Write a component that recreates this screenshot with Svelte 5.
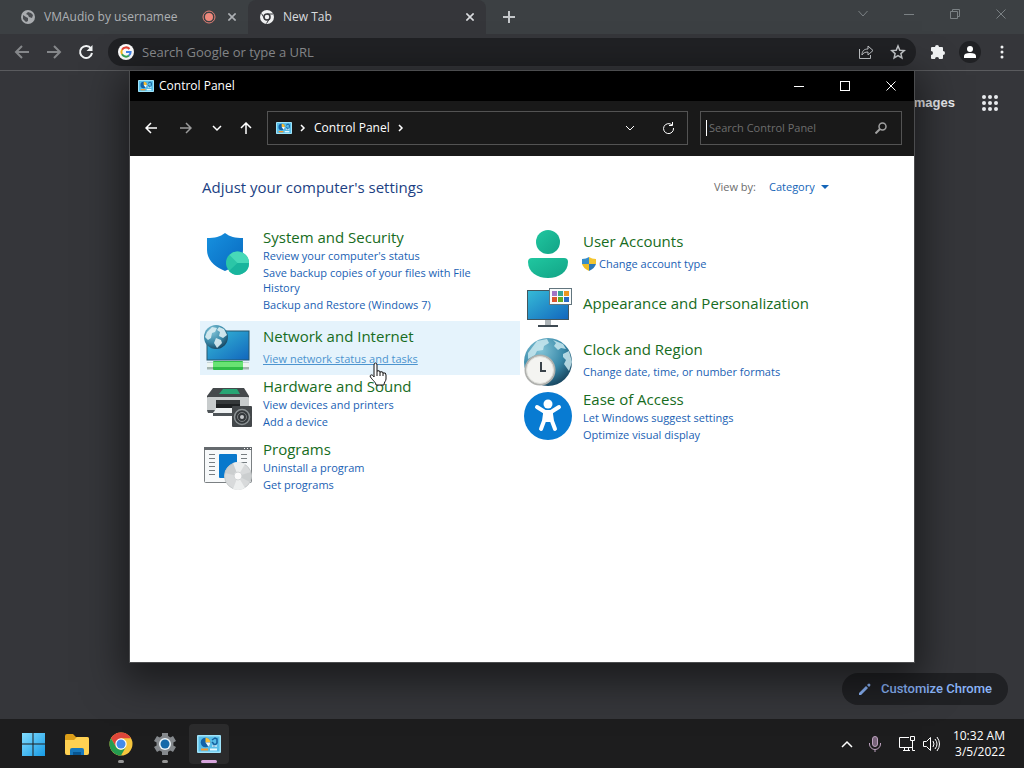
<script>
  let address = $state('');
  let query = $state('');
  let viewBy = $state('Category');

  const columns = [
    [
      {
        icon: 'security',
        title: 'System and Security',
        links: ["Review your computer's status", 'Save backup copies of your files with File History', 'Backup and Restore (Windows 7)']
      },
      { icon: 'network', title: 'Network and Internet', links: ['View network status and tasks'], active: true },
      { icon: 'hardware', title: 'Hardware and Sound', links: ['View devices and printers', 'Add a device'] },
      { icon: 'programs', title: 'Programs', links: ['Uninstall a program', 'Get programs'] }
    ],
    [
      { icon: 'users', title: 'User Accounts', links: ['Change account type'], admin: true },
      { icon: 'appearance', title: 'Appearance and Personalization', links: [] },
      { icon: 'clock', title: 'Clock and Region', links: ['Change date, time, or number formats'] },
      { icon: 'ease', title: 'Ease of Access', links: ['Let Windows suggest settings', 'Optimize visual display'] }
    ]
  ];

  const apps = [
    { id: 'start', label: 'Start' },
    { id: 'files', label: 'File Explorer' },
    { id: 'chrome', label: 'Google Chrome', running: true },
    { id: 'settings', label: 'Settings', running: true },
    { id: 'panel', label: 'Control Panel', active: true }
  ];
  const dots = [0, 1, 2, 3, 4, 5, 6, 7, 8];
</script>

{#snippet panelIcon(size)}
  <svg width={size} height={size} viewBox="0 0 24 24" aria-hidden="true">
    <rect x="0" y="3" width="24" height="18" rx="1" fill="#9fe4fb" />
    <rect x="1.5" y="4.5" width="21" height="15" fill="#58bde8" />
    <circle cx="8.5" cy="10.5" r="4.8" fill="#1262a8" />
    <path d="M8.5 10.5V5.700a4.800 4.800 0 0 1 4.800 4.800z" fill="#f9bd36" />
    <path d="M8.500 10.500h4.800a5 5 0 0 1-2 4z" fill="#e9f8ff" />
    <path d="M15 8l3-2 2 1v4l-2 2M15 10l2 2v3" fill="none" stroke="#165f9d" stroke-width="1.5" />
    <path d="M15 14h5" stroke="#fff" />
    <path d="M4 17.5h7" stroke="#f59a30" stroke-width="2" />
    <path d="M13 17.5h7" stroke="#e8fbff" stroke-width="2" />
  </svg>
{/snippet}

{#snippet cross(size)}
  <svg width={size} height={size} viewBox="0 0 10 10" fill="none" stroke="currentColor" aria-hidden="true"><path d="M.5 .5l9 9M9.5 .5l-9 9" /></svg>
{/snippet}

{#snippet categoryIcon(name)}
  <svg class="cat-icon" width="48" height="48" viewBox="0 0 48 48" aria-hidden="true">
    {#if name === 'security'}
      <path d="M21 3c5 4 10 5 18 5v12c0 10-8 17-18 21C11 37 3 30 3 20V8c8 0 13-1 18-5z" fill="url(#shieldFill)" />
      <circle cx="33.5" cy="33" r="11.5" fill="#2bc6a7" />
      <path d="M33.5 33l-8-8A11.5 11.5 0 0 1 45 33z" fill="#48d9b8" />
      <path d="M33.5 33H45a11.5 11.5 0 0 1-20 8z" fill="#19b59d" />
    {:else if name === 'network'}
      <rect x="3" y="6" width="42" height="29" fill="url(#screenFill)" stroke="#26566d" />
      <path d="M3 41h42" stroke="#a3b5b0" stroke-width="7" />
      <path d="M3 40h42" stroke="#ecf5f0" stroke-width="4" />
      <rect x="9" y="36" width="30" height="9" rx="1" fill="#2fbd47" />
      <rect x="9" y="37" width="30" height="5" fill="#69e373" />
      <circle cx="12" cy="12" r="12" fill="url(#globeFill)" />
      <path d="M3 7l5-5 5 1-2 4-3 1-1 5-3 2-3-3zM15 2l5 2 3 6-4 3-4-2 1-4-3-2zM12 13l5 2 1 3-5 5-3-5z" fill="#dceef3" opacity=".9" />
    {:else if name === 'hardware'}
      <path d="M9 9h31l5 8v15H3V17z" fill="#45494c" />
      <path d="M19 10h14l3 5H15z" fill="#27a574" />
      <rect x="3" y="18" width="42" height="15" rx="1" fill="#c8cccd" />
      <path d="M12 21h24v8H12z" fill="#34383a" />
      <path d="M12 25h24v4H12z" fill="#1e2123" />
      <path d="M12 29h23l-3 5H10z" fill="#eef1f2" />
      <path d="M3 31h8l-2 3H4zM9 34h23v3H9z" fill="#4e5458" />
      <rect x="28" y="27" width="20" height="21" rx="1" fill="#43474a" />
      <circle cx="38" cy="38" r="7.5" fill="#34383b" stroke="#8b9193" stroke-width="1.5" />
      <circle cx="38" cy="38" r="4.5" fill="none" stroke="#7c8082" />
      <circle cx="38" cy="38" r="2" fill="#c4c7c9" />
    {:else if name === 'programs'}
      <rect x=".5" y="5.5" width="47" height="35" rx="1" fill="#f7f9fa" stroke="#7b8083" />
      <path d="M0 6.5h48" stroke="#656a6e" stroke-width="3" />
      <path d="M40 6.5h1M43 6.500h1M46 6.500h1" stroke="#fff" />
      <path d="M5 12.5h6M5 16.500h6M5 20.500h6M5 24.500h6M5 28.500h6M5 32.500h6M37 12.500h6M37 16.500h6M37 20.500h6" stroke="#777e82" />
      <rect x="15" y="12" width="18" height="24" rx="1" fill="#0878cc" />
      <circle cx="34" cy="34" r="13.5" fill="#d8dadb" stroke="#c6cacb" />
      <path d="M34 34l-5-13a14 14 0 0 1 12 1zM34 34l7 12a14 14 0 0 1-12 1z" fill="#eceeee" />
      <path d="M34 34l13-4a14 14 0 0 1-1 10zM34 34l-13-3a14 14 0 0 1 8-10z" fill="#b8bcbe" opacity=".4" />
      <circle cx="34" cy="34" r="4" fill="#fafafa" stroke="#d1d4d5" />
    {:else if name === 'users'}
      <circle cx="24" cy="12" r="12" fill="url(#userFill)" />
      <path d="M8 28h32a4 4 0 0 1 4 4c0 10-9 16-20 16S4 42 4 32a4 4 0 0 1 4-4z" fill="url(#userFill)" />
    {:else if name === 'appearance'}
      <rect x="3.5" y="6.5" width="41" height="29" fill="url(#screenFill)" stroke="#42565e" />
      <path d="M21 36h6v6h-6z" fill="#aeb5b9" /><path d="M14 41h20v2H14z" fill="#3e4951" />
      <rect x="25.5" y="4.5" width="22" height="16" fill="#f9fbfb" stroke="#62757e" />
      <path d="M28 7h5v5h-5z" fill="#a175c5" /><path d="M34 7h5v5h-5z" fill="#36a494" /><path d="M40 7h5v5h-5z" fill="#ed951f" />
      <path d="M28 13h5v5h-5z" fill="#dc542e" /><path d="M34 13h5v5h-5z" fill="#64ab25" /><path d="M40 13h5v5h-5z" fill="#276ac3" />
    {:else if name === 'clock'}
      <circle cx="24" cy="24" r="24" fill="url(#globeFill)" />
      <path d="M4 15L13 3l10-2 2 4-5 3-1 4-6 1-2 4-7 4zM29 2l10 4 3 5-5-1-3 2-4-4 2-3zM39 16l6-3 3 11-3 9-5-7 2-4-3-3z" fill="#c9e8ee" opacity=".85" />
      <circle cx="16" cy="32" r="15.5" fill="#b0b1ae" />
      <circle cx="16" cy="32" r="13.5" fill="#f4f4f1" stroke="#dedfda" />
      <path d="M17 24v9h5" fill="none" stroke="#394249" stroke-width="2" />
    {:else}
      <circle cx="24" cy="24" r="24" fill="#087bd2" />
      <circle cx="24" cy="12" r="4.5" fill="#fff" />
      <path d="M13 15l8 5h6l8-5M21 22l-1 7-3 8M27 22l1 7 3 8" fill="none" stroke="#fff" stroke-width="4" stroke-linecap="round" stroke-linejoin="round" />
      <path d="M19 19h10v11H19z" fill="#fff" />
    {/if}
  </svg>
{/snippet}

{#snippet appIcon(id)}
  {#if id === 'panel'}
    {@render panelIcon(24)}
  {:else}
    <svg width="24" height="24" viewBox="0 0 24 24" aria-hidden="true">
      {#if id === 'start'}
        <path d="M1 1h10.5v10.500H1zM12.500 1H24v10.500H12.500zM1 12.500h10.500V24H1zM12.500 12.500H24V24H12.500z" fill="url(#startFill)" />
      {:else if id === 'files'}
        <path d="M0 4q0-2 2-2h6l3 3h11q2 0 2 2v4H0z" fill="#dc9e18" />
        <path d="M0 8h9l3-3h10q2 0 2 2v14q0 2-2 2H2q-2 0-2-2z" fill="#ffd152" />
        <path d="M5 23v-5q0-2 2-2h10q2 0 2 2v5z" fill="#1778bd" /><path d="M8 20h8v3H8z" fill="#075693" />
      {:else if id === 'chrome'}
        <circle cx="12" cy="12" r="11.5" fill="#f6c63d" />
        <path d="M2 6.300A11.500 11.500 0 0 1 22 6.300H12L7 15z" fill="#df463a" />
        <path d="M2 6.300l5 8.600a5.700 5.700 0 0 0 9.900 0L12 23.500A11.500 11.500 0 0 1 2 6.300z" fill="#259c50" />
        <circle cx="12" cy="12" r="5.7" fill="#fff" /><circle cx="12" cy="12" r="4.5" fill="#448bea" />
      {:else}
        <path d="M12 1v22M2.500 6.500l19 11M21.500 6.500l-19 11" stroke="#85898d" stroke-width="6" stroke-linejoin="round" />
        <circle cx="12" cy="12" r="8.5" fill="#85898d" />
        <circle cx="12" cy="12" r="6" fill="#edf4f9" /><circle cx="12" cy="12" r="4.5" fill="#1669a9" />
      {/if}
    </svg>
  {/if}
{/snippet}

<svg class="defs" width="0" height="0" aria-hidden="true">
  <defs>
    <linearGradient id="shieldFill" x2="1" y2="1"><stop stop-color="#1791df" /><stop offset="1" stop-color="#0869bf" /></linearGradient>
    <linearGradient id="screenFill" x2="1" y2="1"><stop stop-color="#36bbd7" /><stop offset="1" stop-color="#1266bd" /></linearGradient>
    <radialGradient id="globeFill" cx=".35" cy=".25" r=".8"><stop stop-color="#83c4d7" /><stop offset=".6" stop-color="#3989a9" /><stop offset="1" stop-color="#17445e" /></radialGradient>
    <linearGradient id="userFill" x2="1" y2="1"><stop stop-color="#20c7a0" /><stop offset="1" stop-color="#12a386" /></linearGradient>
    <linearGradient id="startFill" x2="1" y2="1"><stop stop-color="#82ddff" /><stop offset="1" stop-color="#169ae5" /></linearGradient>
  </defs>
</svg>

<div class="desktop">
  <section class="browser" aria-label="Browser">
    <div class="tabs">
      <div class="tab first">
        <svg width="14" height="14" viewBox="0 0 14 14" aria-hidden="true"><circle cx="7" cy="7" r="7" fill="#a9acaf" /><path d="M2 5l3 2 2 1v3l-2 1-3-3zM7 2l3 1 2 2-1 3-3-1-1-2-2-1z" fill="#4a4d51" /></svg>
        <span>VMAudio by usernamee</span>
        <svg width="14" height="14" viewBox="0 0 14 14" aria-hidden="true"><circle cx="7" cy="7" r="6" fill="none" stroke="#e57f75" /><circle cx="7" cy="7" r="4" fill="#ef887c" /></svg>
        <button class="tab-close" aria-label="Close VMAudio">{@render cross(8)}</button>
      </div>
      <div class="tab current">
        <svg width="14" height="14" viewBox="0 0 14 14" aria-hidden="true"><circle cx="7" cy="7" r="7" fill="#f0f1f2" /><circle cx="7" cy="7" r="3" fill="none" stroke="#35363a" stroke-width="1.5" /><path d="M7 4h6M4.500 8.500l-3-5M9.500 8.500l-3 5" stroke="#35363a" /></svg>
        <span>New Tab</span>
        <button class="tab-close" aria-label="Close New Tab">{@render cross(8)}</button>
      </div>
      <button class="new-tab" aria-label="New tab"><svg width="12" height="12" viewBox="0 0 12 12" stroke="currentColor" stroke-width="2"><path d="M6 0v12M0 6h12" /></svg></button>
      <div class="captions dim">
        <button aria-label="Search tabs"><svg width="10" height="8" viewBox="0 0 10 8" fill="none" stroke="currentColor"><path d="M.5 1l4.500 5 4.500-5" /></svg></button>
        <button aria-label="Minimize browser"><svg width="10" height="10" viewBox="0 0 10 10" stroke="currentColor"><path d="M0 5.500h10" /></svg></button>
        <button aria-label="Restore browser"><svg width="10" height="10" viewBox="0 0 10 10" fill="none" stroke="currentColor"><path d="M.5 2.500h7v7h-7zM2.500 2.500v-2h7v7h-2" /></svg></button>
        <button aria-label="Close browser">{@render cross(10)}</button>
      </div>
    </div>

    <div class="toolbar">
      <div class="tools">
        <button class="faded" aria-label="Back"><svg width="16" height="16" viewBox="0 0 16 16" fill="none" stroke="currentColor" stroke-width="2"><path d="M15 8H2M8 2L2 8l6 6" /></svg></button>
        <button class="faded" aria-label="Forward"><svg width="16" height="16" viewBox="0 0 16 16" fill="none" stroke="currentColor" stroke-width="2"><path d="M1 8h13M8 2l6 6-6 6" /></svg></button>
        <button aria-label="Reload"><svg width="16" height="16" viewBox="0 0 16 16" fill="none" stroke="currentColor" stroke-width="2"><path d="M13 4.500A6 6 0 1 0 14 9" /><path d="M14.500 1v6h-6z" fill="currentColor" stroke="none" /></svg></button>
      </div>
      <div class="omnibox">
        <svg width="16" height="16" viewBox="0 0 16 16" fill="none" stroke-width="2" aria-hidden="true"><circle cx="8" cy="8" r="8" fill="#fff" /><path d="M11.500 5A4.600 4.600 0 0 0 4 5.700" stroke="#e44336" /><path d="M4 5.700a4.600 4.600 0 0 0 0 4.600" stroke="#f5b61f" /><path d="M4 10.300A4.600 4.600 0 0 0 11 11.500" stroke="#33a554" /><path d="M11 11.500A4.600 4.600 0 0 0 12.600 8H8" stroke="#4285ee" /></svg>
        <input aria-label="Search Google or type a URL" placeholder="Search Google or type a URL" bind:value={address} />
        <button aria-label="Share"><svg width="16" height="16" viewBox="0 0 16 16" fill="none" stroke="currentColor"><path d="M1.500 5v9.500h11V11M4 11c0-4 2-6 6-6V2l5 4.500-5 4.500V8C7 8 5 9 4 11z" /></svg></button>
        <button aria-label="Bookmark"><svg width="16" height="16" viewBox="0 0 16 16" fill="none" stroke="currentColor" stroke-width="1.5"><path d="M8 2l1.800 4.200 4.500.4-3.400 3 1 4.400L8 11.700 4.100 14l1-4.400-3.400-3 4.500-.4z" /></svg></button>
      </div>
      <div class="tools">
        <button aria-label="Extensions"><svg width="16" height="16" viewBox="0 0 16 16" fill="currentColor"><path d="M5 3a2 2 0 0 1 4 0h3q1 0 1 1v3a2 2 0 0 1 0 4v3q0 1-1 1H9a2 2 0 0 0-4 0H2q-1 0-1-1v-3a2 2 0 0 0 0-4V4q0-1 1-1z" /></svg></button>
        <button aria-label="Profile"><svg width="22" height="22" viewBox="0 0 22 22"><circle cx="11" cy="11" r="11" fill="#202124" /><circle cx="11" cy="8" r="3" fill="#fff" /><path d="M5 17v-2q0-3 6-3t6 3v2z" fill="#fff" /></svg></button>
        <button aria-label="Browser menu"><svg width="4" height="14" viewBox="0 0 4 14" fill="currentColor"><circle cx="2" cy="2" r="1.5" /><circle cx="2" cy="7" r="1.5" /><circle cx="2" cy="12" r="1.5" /></svg></button>
      </div>
    </div>

    <div class="page">
      <div class="page-top">
        <a href="#images">Images</a>
        <button aria-label="Google apps"><svg width="16" height="16" viewBox="0 0 16 16" fill="currentColor">{#each dots as d (d)}<circle cx={2 + (d % 3) * 6} cy={2 + Math.floor(d / 3) * 6} r="2" />{/each}</svg></button>
      </div>
      <button class="customize">
        <svg width="14" height="14" viewBox="0 0 14 14" fill="currentColor" aria-hidden="true"><path d="M1 11l7-7 2 2-7 7H1zM9 3l1-1q1-1 2 0t0 2l-1 1z" /></svg>
        Customize Chrome
      </button>
    </div>
  </section>

  <main class="window">
    <header class="titlebar">
      {@render panelIcon(16)}
      <span>Control Panel</span>
      <div class="captions">
        <button aria-label="Minimize"><svg width="10" height="10" viewBox="0 0 10 10" stroke="currentColor"><path d="M0 5.500h10" /></svg></button>
        <button aria-label="Maximize"><svg width="10" height="10" viewBox="0 0 10 10" fill="none" stroke="currentColor"><rect x=".5" y=".5" width="9" height="9" /></svg></button>
        <button aria-label="Close">{@render cross(10)}</button>
      </div>
    </header>

    <nav class="navbar" aria-label="Control Panel navigation">
      <button class="back" aria-label="Back"><svg width="12" height="12" viewBox="0 0 12 12" fill="none" stroke="currentColor" stroke-width="1.5"><path d="M12 6H1M6 1L1 6l5 5" /></svg></button>
      <button class="forward" aria-label="Forward"><svg width="12" height="12" viewBox="0 0 12 12" fill="none" stroke="currentColor" stroke-width="1.5"><path d="M0 6h11M6 1l5 5-5 5" /></svg></button>
      <button class="recent" aria-label="Recent locations"><svg width="10" height="8" viewBox="0 0 10 8" fill="none" stroke="currentColor" stroke-width="1.5"><path d="M1 2l4 4 4-4" /></svg></button>
      <button class="up" aria-label="Up"><svg width="12" height="12" viewBox="0 0 12 12" fill="none" stroke="currentColor" stroke-width="1.5"><path d="M6 12V1M1 6l5-5 5 5" /></svg></button>
      <div class="address">
        {@render panelIcon(16)}
        <svg width="6" height="8" viewBox="0 0 6 8" fill="none" stroke="currentColor" stroke-width="1.5" aria-hidden="true"><path d="M1 1l3 3-3 3" /></svg>
        <a href="#control-panel">Control Panel</a>
        <svg width="6" height="8" viewBox="0 0 6 8" fill="none" stroke="currentColor" stroke-width="1.5" aria-hidden="true"><path d="M1 1l3 3-3 3" /></svg>
        <div class="address-tools">
          <button aria-label="Previous locations"><svg width="10" height="8" viewBox="0 0 10 8" fill="none" stroke="currentColor"><path d="M1 2l4 4 4-4" /></svg></button>
          <button aria-label="Refresh"><svg width="12" height="12" viewBox="0 0 12 12" fill="none" stroke="currentColor"><path d="M10 3a5 5 0 1 0 1.500 3M10.500 0v3.500H7" /></svg></button>
        </div>
      </div>
      <div class="search">
        <span class="caret"></span>
        <input aria-label="Search Control Panel" placeholder="Search Control Panel" bind:value={query} />
        <svg width="12" height="12" viewBox="0 0 12 12" fill="none" stroke="currentColor" stroke-width="1.5" aria-hidden="true"><circle cx="7.5" cy="4.5" r="3.5" /><path d="M5 7L.5 11.500" stroke-width="2" /></svg>
      </div>
    </nav>

    <div class="content">
      <div class="heading">
        <h1>Adjust your computer's settings</h1>
        <div class="view">
          <label for="view">View by:</label>
          <select id="view" bind:value={viewBy}><option>Category</option></select>
          <svg width="8" height="4" viewBox="0 0 8 4" fill="currentColor" aria-hidden="true"><path d="M0 0h8L4 4z" /></svg>
        </div>
      </div>

      <div class="categories">
        {#each columns as column, i (i)}
          <div class="column">
            {#each column as item (item.icon)}
              <section class="category" class:active={item.active} class:single={item.links.length < 2} class:bare={!item.links.length}>
                {@render categoryIcon(item.icon)}
                <div class="details">
                  <h2><a href="#{item.icon}">{item.title}</a></h2>
                  {#if item.links.length}
                    <ul>
                      {#each item.links as link (link)}
                        <li>
                          {#if item.admin}
                            <svg class="admin" width="14" height="14" viewBox="0 0 14 14" aria-hidden="true"><path d="M7 0C5 1 3 2 0 2v5h7z" fill="#368dc9" /><path d="M7 0c2 1 4 2 7 2v5H7z" fill="#f4c52f" /><path d="M0 7h7v7C3 12 1 10 0 7z" fill="#eebd27" /><path d="M7 7h7c-1 3-3 5-7 7z" fill="#2b77b7" /></svg>
                          {/if}
                          <a href="#{item.icon}-task">{link}</a>
                          {#if item.active}
                            <svg class="pointer" width="18" height="24" viewBox="0 0 18 24" aria-hidden="true"><path d="M5 14V3q0-2 1.500-2T8 3v6q3-1 3 1 3-1 3 1 3-1 3 2v4c0 2-2 3-2 6H7c0-3-5-6-6-9 1-2 3-1 4 1z" fill="#fff" stroke="#111" stroke-linejoin="round" /><path d="M8 9v5M11 10v4M14 11v3" stroke="#111" /></svg>
                          {/if}
                        </li>
                      {/each}
                    </ul>
                  {/if}
                </div>
              </section>
            {/each}
          </div>
        {/each}
      </div>
    </div>
  </main>

  <footer class="taskbar">
    <div class="apps">
      {#each apps as app (app.id)}
        <button aria-label={app.label} class:running={app.running} class:active={app.active}>{@render appIcon(app.id)}</button>
      {/each}
    </div>
    <div class="tray">
      <button class="more" aria-label="Show hidden icons"><svg width="12" height="8" viewBox="0 0 12 8" fill="none" stroke="currentColor" stroke-width="1.5"><path d="M1 7l5-5 5 5" /></svg></button>
      <button class="mic" aria-label="Microphone"><svg width="12" height="16" viewBox="0 0 12 16" fill="none" stroke="currentColor"><rect x="3.5" y=".5" width="5" height="10" rx="2.5" fill="#776379" /><path d="M.5 7v1a5.500 5.500 0 0 0 11 0V7M6 13.500V16" /></svg></button>
      <button class="status" aria-label="Network and volume">
        <svg width="17" height="17" viewBox="0 0 17 17" fill="none" stroke="currentColor"><path d="M10 2.500H.5v10h13V9M4 15.500h7M5.500 13v2M9.500 13v2M11.500 1.500h4v4h-4zM13.500 6v9.500H16" /></svg>
        <svg width="17" height="16" viewBox="0 0 17 16" fill="none" stroke="currentColor"><path d="M.5 5.500h3l4-4v13l-4-4h-3zM10 5q2 3 0 6M12 3q4 5 0 10M14 1q5 7 0 14" /></svg>
      </button>
      <button class="clock"><span>10:32 AM</span><span>3/5/2022</span></button>
    </div>
  </footer>
</div>

<style>
  :global(body){margin:0;background:#35363a}
  *{box-sizing:border-box}
  button,input,select{font:inherit;color:inherit;background:none;border:0;padding:0;margin:0;outline:0}
  button{display:flex;align-items:center;justify-content:center}
  a{color:inherit;text-decoration:none}
  svg{flex:none}
  .defs{position:absolute}
  .desktop{position:relative;display:flex;flex-direction:column;min-height:100vh;font:12px/16px "Open Sans","Noto Sans",sans-serif;color:#fff}

  .browser{flex:1;display:flex;flex-direction:column}
  .tabs{display:flex;height:34px;background:#3c4043;color:#adb0b4}
  .tab{display:flex;align-items:center;gap:9px;padding-right:9px}
  .tab span{flex:1;white-space:nowrap}
  .tab-close{width:14px;height:16px}
  .tab-close svg{stroke-width:2}
  .first{width:248px;padding-left:21px}
  .current{width:238px;padding-left:12px;background:#35363a;border-radius:8px 8px 0 0;color:#d9dbde}
  .new-tab{width:46px;color:#c4c7ca}
  .captions{display:flex;margin-left:auto}
  .captions button{width:46px}
  .dim{height:28px;color:#7b8184}
  .toolbar{display:flex;align-items:center;gap:6px;height:37px;padding:0 6px;border-bottom:1px solid #5a5b5e;background:#35363a}
  .tools{display:flex;color:#f1f3f4}
  .tools button{width:32px;height:32px}
  .tools .faded{color:#85878a}
  .omnibox{flex:1;display:flex;align-items:center;gap:8px;height:28px;padding:0 6px 0 10px;border-radius:14px;background:#202124;color:#c4c7ca}
  .omnibox input{flex:1;min-width:0;font-size:13px;line-height:20px}
  .omnibox button{width:24px;height:28px}
  input::placeholder{color:#8b8d90;opacity:1}
  .page{flex:1;display:flex;flex-direction:column;justify-content:space-between;background:#35363a}
  .page-top{display:flex;justify-content:flex-end;align-items:center;gap:15px;height:64px;padding-right:14px;font:bold 13px/16px "Liberation Sans",Arial,sans-serif;color:#e8eaed}
  .page-top button{width:40px;height:40px}
  .customize{align-self:flex-end;gap:9px;height:32px;margin:0 16px 14px;padding:0 16px;border-radius:16px;background:#202124;color:#8ab4f8;font:500 13px/16px Roboto,sans-serif}

  .window{position:absolute;top:71px;right:110px;bottom:106px;left:130px;display:flex;flex-direction:column;background:#fff;box-shadow:0 0 0 1px #4b4c4e,0 12px 36px 8px rgba(0,0,0,.5)}
  .titlebar{display:flex;align-items:center;gap:5px;height:30px;padding-left:8px;background:#000}
  .titlebar .captions{align-self:stretch}
  .navbar{display:flex;align-items:center;height:55px;padding:0 12px 1px 3px;background:#191919}
  .navbar > button{height:34px}
  .back{width:36px}
  .forward{width:34px;color:#9b9b9b}
  .recent{width:28px}
  .up{width:30px;margin-right:6px}
  .address{flex:1;display:flex;align-items:center;gap:8px;height:34px;padding-left:8px;border:1px solid #535353}
  .address-tools{display:flex;margin-left:auto}
  .address-tools button{width:38px;height:32px}
  .search{display:flex;align-items:center;width:202px;height:34px;margin-left:12px;padding:0 14px 0 5px;border:1px solid #535353;color:#a0a0a0}
  .search input{flex:1;min-width:0;padding-left:2px;font-size:11px}
  .search input::placeholder{color:#6d6d6d}
  .caret{width:1px;height:16px;background:#fff}

  .content{flex:1;padding:19px 74px 0 70px}
  .heading{display:flex;align-items:center;justify-content:space-between;height:24px;padding:0 15px 0 2px;color:#1c3f83}
  .heading{padding-right:11px}
  h1{margin:0;font-size:15px;line-height:24px;font-weight:400}
  .view{display:flex;align-items:center;font-size:11px;color:#1465b8}
  .view label{margin-right:13px;color:#6d6d6d}
  select{appearance:none;margin-right:6px}
  .categories{display:grid;grid-template-columns:repeat(2,minmax(0,320px));padding-top:27px}
  .category{display:flex;gap:11px;padding:1px 30px 8px 4px}
  .active{background:#e5f3fc}
  .cat-icon{margin-top:3px}
  .details{flex:1;min-width:0}
  h2{margin:0;font-size:15px;line-height:20px;font-weight:400;color:#176c22;white-space:nowrap}
  ul{list-style:none;margin:0;padding:0;color:#1a5fb4;font-size:11px}
  li{position:relative;display:flex;align-items:center;gap:3px;padding:1px 0;line-height:15px}
  .single{height:54px;padding-bottom:0}
  .single .details{padding-top:4px}
  .single ul{padding-top:4px}
  .bare .details{padding-top:12px}
  .active li a{color:#4c94cf;text-decoration:underline}
  .admin{margin-left:-1px}
  .pointer{position:absolute;top:12px;left:106px}

  .taskbar{display:flex;align-items:center;justify-content:space-between;height:49px;padding:0 19px 0 13px;background:#1d1d1e}
  .apps{display:flex;gap:4px}
  .apps button{position:relative;width:40px;height:40px;border-radius:4px}
  .apps .active{background:#2b2b2c}
  .apps .running::after,.apps .active::after{content:"";position:absolute;bottom:1px;left:17px;width:6px;height:3px;border-radius:2px;background:#959595}
  .apps .active::after{left:12px;width:16px;background:#d6a5dc}
  .tray{display:flex;align-items:center}
  .tray button{height:40px}
  .more,.mic{width:28px}
  .mic{color:#bda2bf}
  .status{gap:7px;width:60px}
  .clock{flex-direction:column;align-items:flex-end;width:56px}
</style>
